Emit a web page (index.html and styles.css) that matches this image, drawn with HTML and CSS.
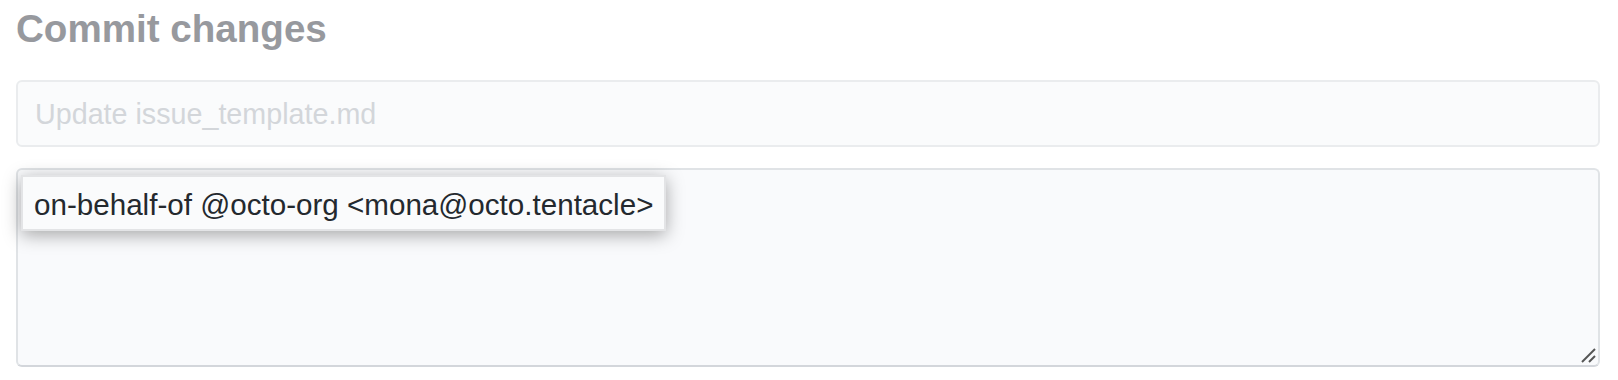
FILE: index.html
```html
<!DOCTYPE html>
<html>
<head>
<meta charset="utf-8">
<link rel="stylesheet" href="styles.css">
</head>
<body>
<div class="page">
  <h1 class="title">Commit changes</h1>
  <div class="input">Update issue_template.md</div>
  <div class="textarea">
    <div class="popup">on-behalf-of @octo-org &lt;mona@octo.tentacle&gt;</div>
    <svg class="grip" width="16" height="16" viewBox="0 0 16 16">
      <line x1="2" y1="15" x2="15" y2="2" stroke="#555" stroke-width="2"/>
      <line x1="9" y1="15" x2="15" y2="9" stroke="#555" stroke-width="2"/>
    </svg>
  </div>
</div>
</body>
</html>
```
FILE: styles.css
```css
html, body {
  margin: 0;
  padding: 0;
  background: #ffffff;
}
.page {
  display: flex;
  flex-direction: column;
  padding: 7px 18px 0 16px;
  font-family: "Liberation Sans", Arial, sans-serif;
}
.title {
  margin: 0;
  font-size: 38.6px;
  line-height: 44px;
  font-weight: 700;
  color: #97999e;
}
.input {
  margin-top: 29px;
  height: 67px;
  box-sizing: border-box;
  border: 2px solid #eaecee;
  border-radius: 6px;
  background: #fafbfc;
  display: flex;
  align-items: center;
  padding: 2px 17px 0;
  font-size: 28.7px;
  color: #d3d6da;
}
.textarea {
  position: relative;
  margin-top: 21px;
  height: 199px;
  box-sizing: border-box;
  border: 2px solid #e0e3e6;
  border-bottom-color: #d3d6db;
  border-radius: 6px;
  background: #f9fafc;
}
.popup {
  position: absolute;
  top: 5px;
  left: 3px;
  height: 56px;
  box-sizing: border-box;
  display: flex;
  align-items: center;
  padding: 3px 11px 0 11px;
  background: #fafbfc;
  border: 2px solid #e3e4e6;
  box-shadow: 0 4px 18px rgba(0, 0, 0, 0.34);
  font-size: 29.6px;
  color: #24292e;
  white-space: nowrap;
}
.grip {
  position: absolute;
  right: 2px;
  bottom: 2px;
}
```
